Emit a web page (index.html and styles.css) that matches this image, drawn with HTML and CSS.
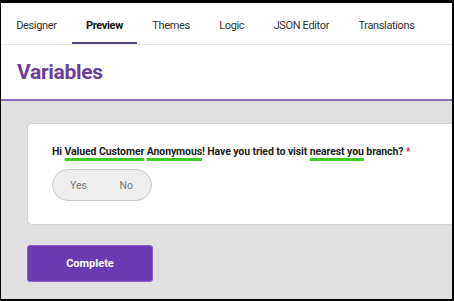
FILE: index.html
```html
<!DOCTYPE html>
<html lang="en">
<head>
<meta charset="UTF-8">
<meta name="viewport" content="width=device-width, initial-scale=1.0">
<title>Variables</title>
<link rel="stylesheet" href="styles.css">
</head>
<body>

<div class="frame">
  <div class="tabs">
    <div class="tab">Designer</div>
    <div class="tab active">Preview</div>
    <div class="tab">Themes</div>
    <div class="tab">Logic</div>
    <div class="tab">JSON Editor</div>
    <div class="tab">Translations</div>
  </div>

  <div class="header">
    <h1>Variables</h1>
  </div>

  <div class="body">
    <div class="card">
      <div class="question">
        Hi <span class="mark">Valued Customer</span> <span class="mark">Anonymous</span>! Have you tried to visit <span class="mark">nearest you</span> branch? <span class="req">*</span>
      </div>
      <div class="toggle">
        <span>Yes</span>
        <span>No</span>
      </div>
    </div>

    <button class="complete">Complete</button>
  </div>
</div>

</body>
</html>
```

FILE: styles.css
```css
html, body {
  margin: 0;
  height: 100%;
  background: #000;
}
body {
  font-family: Roboto, Arial, sans-serif;
  padding: 3px 2px 2px 1px;
  box-sizing: border-box;
}
.frame {
  background: #e0e0e0;
  height: 100%;
  overflow: hidden;
  display: flex;
  flex-direction: column;
}
.tabs {
  background: #fff;
  display: flex;
  height: 41px;
  border-bottom: 1px solid #e6e6e6;
  padding-left: 1px;
}
.tab {
  padding: 5px 14.2px 0;
  font-size: 11px;
  letter-spacing: -0.35px;
  color: #333;
  display: flex;
  align-items: center;
  white-space: nowrap;
  border-bottom: 2px solid transparent;
}
.tab + .tab {
  margin-left: 1px;
}
.tab.active {
  font-weight: bold;
  color: #111;
  border-bottom-color: #5a4a80;
}
.header {
  background: #fff;
  height: 54px;
  border-bottom: 2px solid #8a6cbb;
  display: flex;
  align-items: center;
  padding-left: 16px;
}
.header h1 {
  margin: 0;
  font-size: 21px;
  letter-spacing: -0.3px;
  font-weight: bold;
  color: #6a3d9e;
}
.body {
  padding: 22px 0 0 26px;
}
.card {
  background: #fff;
  border-radius: 5px;
  border: 1px solid #d4d4d4;
  border-right: none;
  margin-right: -10px;
  padding: 21px 0 23px 24px;
}
.question {
  font-size: 10.5px;
  letter-spacing: -0.1px;
  font-weight: bold;
  color: #222;
  line-height: 14px;
}
.mark {
  text-decoration: underline;
  text-decoration-color: #3ccc22;
  text-decoration-thickness: 3px;
  text-underline-offset: 3px;
}
.req {
  color: #d9304f;
}
.toggle {
  margin-top: 10px;
  width: 100px;
  height: 32px;
  border: 1px solid #c8c8c8;
  border-radius: 16px;
  background: #eeeeee;
  display: flex;
  align-items: center;
  justify-content: space-between;
  padding: 0 18px 0 17px;
  box-sizing: border-box;
  font-size: 10.5px;
  color: #777;
}
.complete {
  margin-top: 20px;
  width: 126px;
  height: 37px;
  background-color: #6a3ab2;
  color: white;
  border: 1px solid #8a60cc;
  border-radius: 3px;
  font-family: Roboto, Arial, sans-serif;
  font-size: 11px;
  font-weight: bold;
}
```
